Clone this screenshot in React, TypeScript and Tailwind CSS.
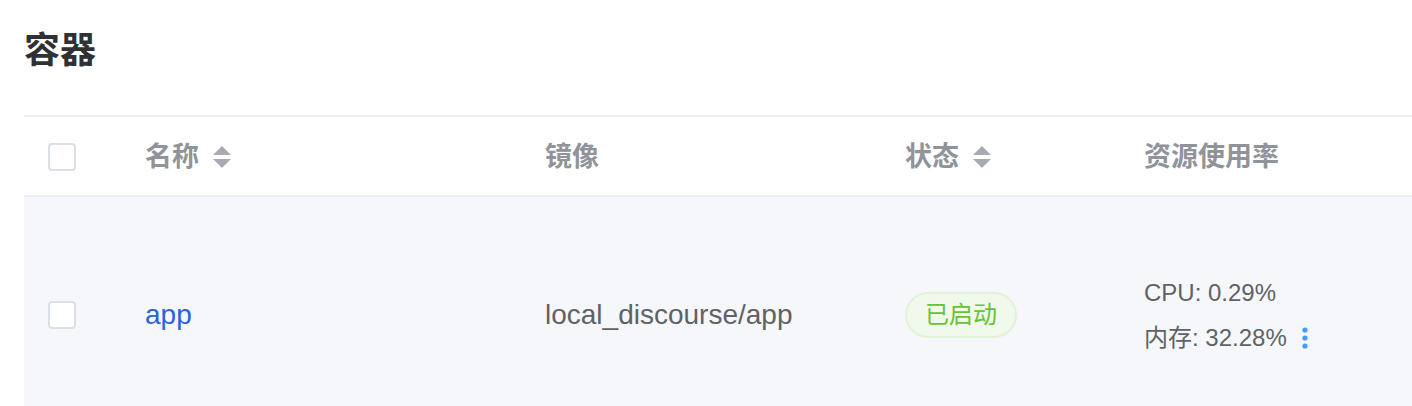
import React from 'react';

const font = { fontFamily: '"Liberation Sans", "Noto Sans CJK SC", sans-serif' };

const Checkbox = () => (
  <span className="block w-[28px] h-[28px] rounded-[4px] border-2 border-[#dcdfe6] bg-white" />
);

const SortIcon = () => (
  <svg width="20" height="24" viewBox="0 0 20 24" className="ml-[13px]">
    <path d="M10 1 L19 10 L1 10 Z" fill="#a8abb2" />
    <path d="M10 23 L19 14 L1 14 Z" fill="#a8abb2" />
  </svg>
);

const MoreIcon = () => (
  <svg width="6" height="22" viewBox="0 0 6 22">
    <circle cx="3" cy="3" r="2.6" fill="#409eff" />
    <circle cx="3" cy="11" r="2.6" fill="#409eff" />
    <circle cx="3" cy="19" r="2.6" fill="#409eff" />
  </svg>
);

export default function App() {
  return (
    <div className="w-[1412px] h-[406px] overflow-hidden bg-white" style={font}>
      <h1 className="pl-[24px] pt-[24px] mb-[37px] text-[36px] leading-[54px] font-bold text-[#303133]">
        容器
      </h1>

      <div className="ml-[24px] border-t-2 border-[#ebeef5]">
        {/* header */}
        <div className="flex items-center h-[80px] pt-[2px] border-b-2 border-[#ebeef5] text-[27px] font-bold text-[#909399]">
          <div className="w-[97px] pl-[24px] flex items-center">
            <Checkbox />
          </div>
          <div className="w-[400px] pl-[24px] flex items-center">
            <span>名称</span>
            <SortIcon />
          </div>
          <div className="w-[360px] pl-[24px]">镜像</div>
          <div className="w-[239px] pl-[24px] flex items-center">
            <span>状态</span>
            <SortIcon />
          </div>
          <div className="flex-1 pl-[24px]">资源使用率</div>
        </div>

        {/* row */}
        <div className="flex items-center h-[236px] bg-[#f5f7fa]">
          <div className="w-[97px] pl-[24px] flex items-center">
            <Checkbox />
          </div>
          <div className="w-[400px] pl-[24px] text-[28px] text-[#2a62e0]">app</div>
          <div className="w-[360px] pl-[24px] text-[28px] text-[#606266]">local_discourse/app</div>
          <div className="w-[239px] pl-[24px]">
            <span className="inline-flex items-center h-[46px] px-[18px] rounded-full border-2 border-[#e1f3d8] bg-[#f0f9eb] text-[24px] text-[#67c23a]">
              已启动
            </span>
          </div>
          <div className="flex-1 pl-[24px] text-[24px] leading-[45px] text-[#606266]">
            <div>CPU: 0.29%</div>
            <div className="flex items-center gap-[15px]">
              <span>内存: 32.28%</span>
              <MoreIcon />
            </div>
          </div>
        </div>
      </div>
    </div>
  );
}
